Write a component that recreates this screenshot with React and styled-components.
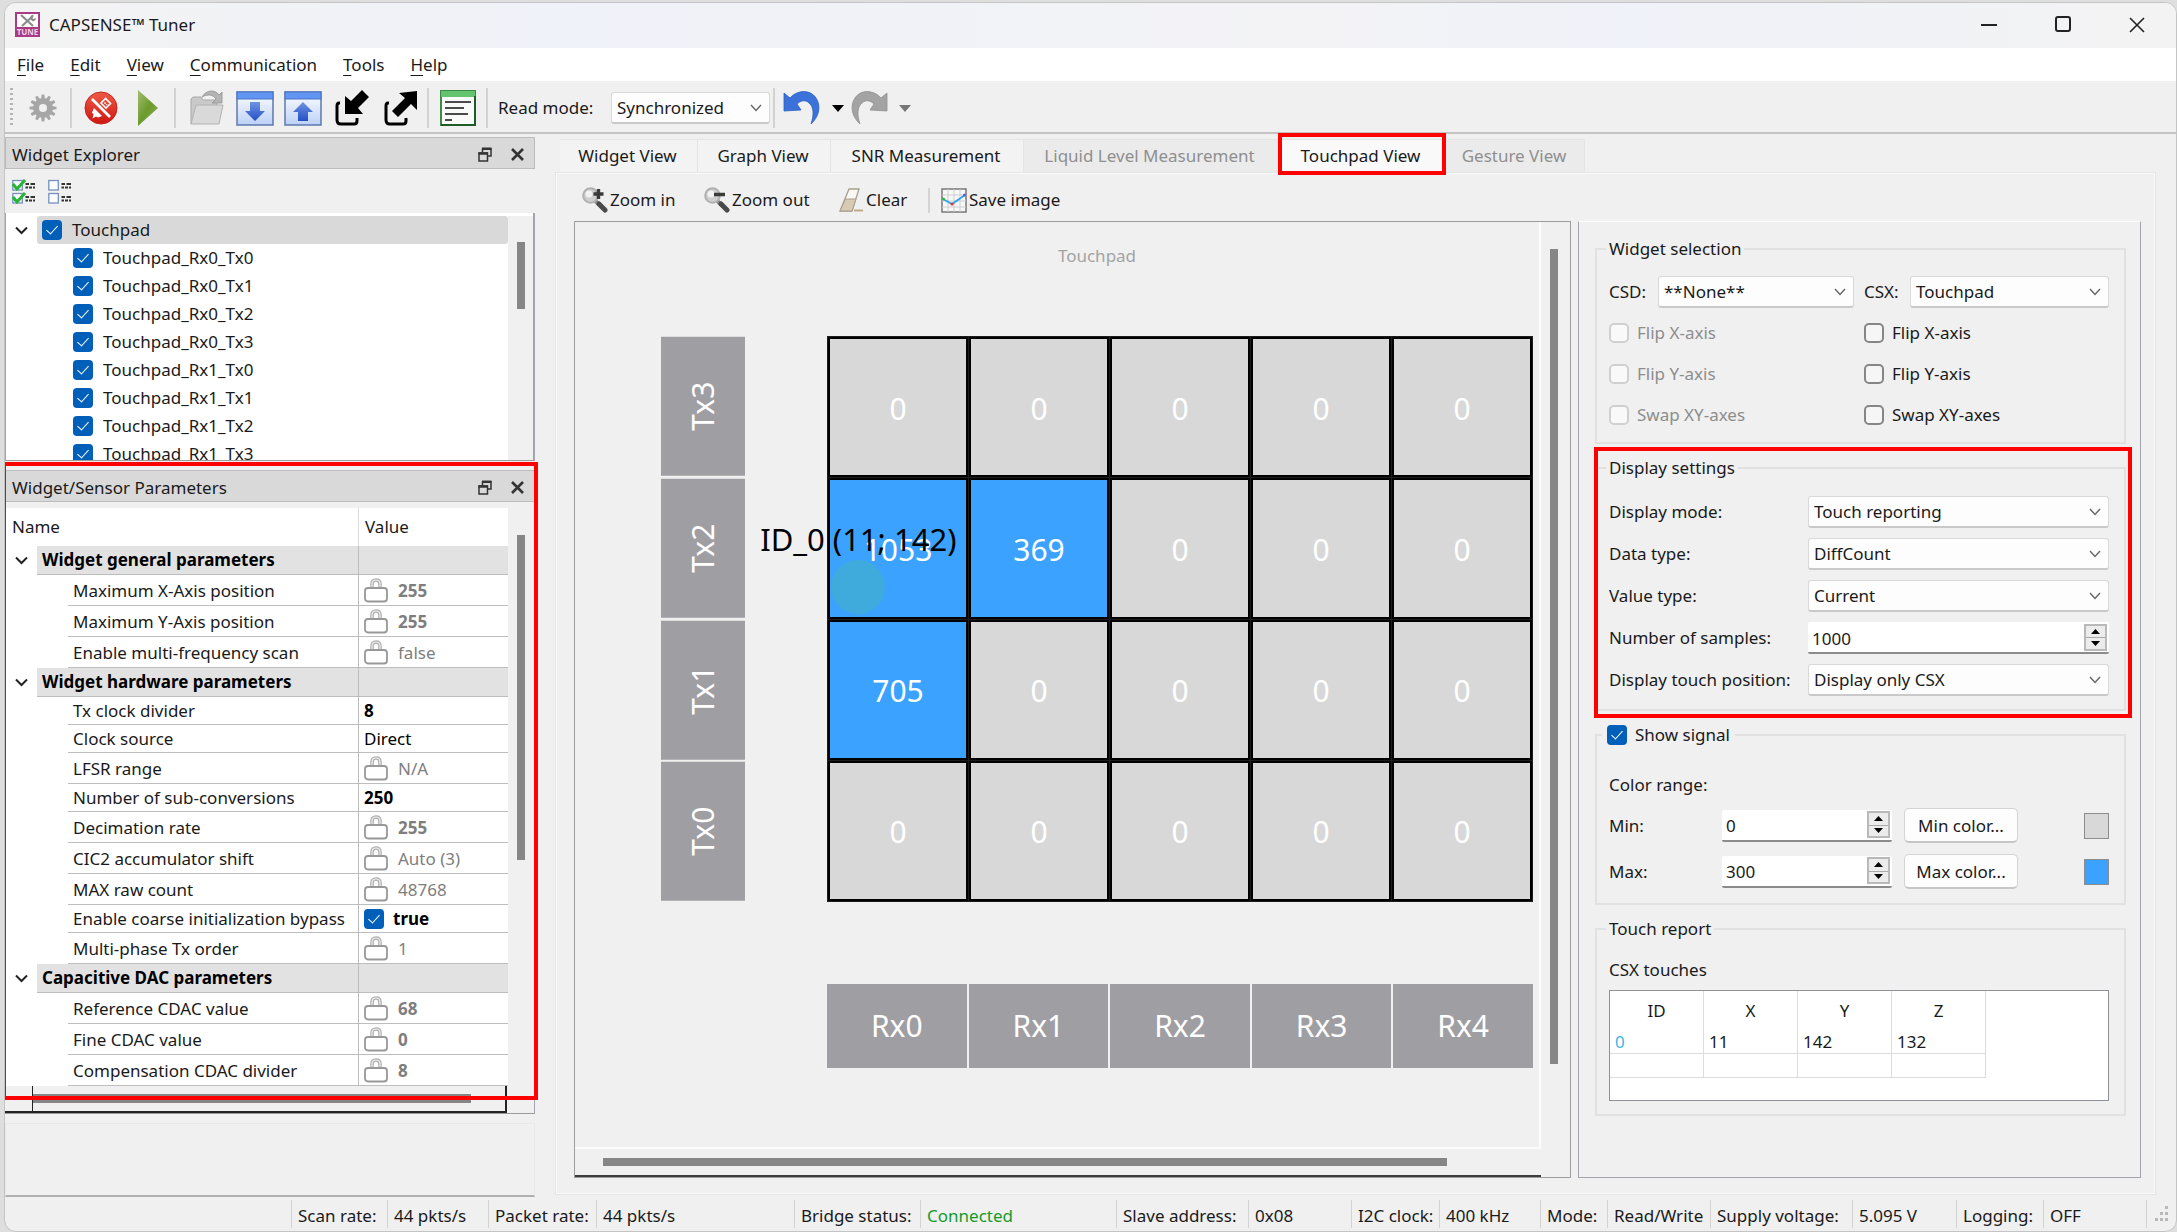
import React, { useState } from "react";
import styled, { createGlobalStyle, css } from "styled-components";

const GlobalStyle = createGlobalStyle`
  *, *::before, *::after { box-sizing: border-box; }
  body {
    margin: 0;
    background: #dedede;
    font-family: "Noto Sans", "Open Sans", sans-serif;
    font-size: 17px;
    line-height: 24px;
    color: #1a1a1a;
  }
  button, input, select { font: inherit; color: inherit; margin: 0; }
`;

/* ---------- window frame ---------- */

const Window = styled.div`
  display: flex;
  flex-direction: column;
  height: calc(100vh - 2px);
  margin: 2px 0 0 4px;
  border: 1px solid #c4c4c4;
  border-radius: 12px;
  background: #f0f0f0;
  overflow: hidden;
`;

const TitleBar = styled.header`
  display: flex;
  align-items: center;
  gap: 9px;
  height: 45px;
  flex: none;
  padding: 0 15px 2px 10px;
  background: linear-gradient(90deg, #f3f3f3, #f0f2f9 25%, #f3f3f6 60%, #f0f2f9 75%, #f3f3f3);
`;

const WindowTitle = styled.h1`
  flex: 1;
  margin: 0;
  font-size: 17px;
  font-weight: 400;
`;

const WindowButtons = styled.div`
  display: flex;
  gap: 26px;
`;

const CaptionButton = styled.button`
  display: grid;
  place-items: center;
  width: 48px;
  height: 32px;
  padding: 0;
  border: 0;
  background: none;
`;

const MenuBar = styled.nav`
  display: flex;
  align-items: center;
  gap: 26px;
  height: 33px;
  flex: none;
  padding-left: 12px;
  background: #fff;
`;

const MenuItem = styled.button`
  padding: 0;
  border: 0;
  background: none;
  line-height: 32px;
  u { text-underline-offset: 4px; text-decoration-thickness: 1px; }
`;

const Toolbar = styled.div`
  display: flex;
  align-items: center;
  height: 53px;
  flex: none;
  padding: 3px 0 0 5px;
  border-bottom: 2px solid #c3c3c3;
`;

const ToolCell = styled.div`
  display: flex;
  align-items: center;
  flex: none;
  width: ${(p) => p.$w}px;
  height: 40px;
  border-left: ${(p) => (p.$sep ? "2px solid #d2d2d2" : "0")};
  padding-left: ${(p) => p.$pad || 0}px;
`;

const IconButton = styled.button`
  display: grid;
  place-items: center;
  padding: 0;
  border: 0;
  background: none;
  svg { display: block; }
`;

const Grip = styled.div`
  width: 3px;
  height: 40px;
  background: repeating-linear-gradient(#b4b4b4 0 2px, transparent 2px 5px);
`;

/* ---------- shared controls ---------- */

const SelectBox = styled.span`
  display: grid;
  align-items: center;
  width: ${(p) => (p.$w ? p.$w + "px" : "100%")};
  height: 32px;
  > * { grid-area: 1 / 1; }
  svg { justify-self: end; margin-right: 8px; pointer-events: none; }
`;

const NativeSelect = styled.select`
  appearance: none;
  width: 100%;
  height: 32px;
  padding: 1px 28px 0 5px;
  border: 1px solid #d9d9d9;
  border-bottom: 2px solid #c9c9c9;
  border-radius: 3px;
  background: #fdfdfd;
`;

function Select({ id, value, width }) {
  return (
    <SelectBox $w={width}>
      <NativeSelect id={id} defaultValue={value}>
        <option>{value}</option>
      </NativeSelect>
      <svg width="12" height="8" viewBox="0 0 12 8" fill="none" stroke="#666" strokeWidth="1.4">
        <path d="M1 1l5 5.5L11 1" />
      </svg>
    </SelectBox>
  );
}

const CheckBox = styled.input`
  appearance: none;
  display: grid;
  place-items: center;
  flex: none;
  width: 20px;
  height: 20px;
  border: 2px solid #868686;
  border-radius: 5px;
  background: #f6f6f6;
  &:disabled { border-color: #d0d0d0; background: #f9f9f9; }
  &:checked { border: 0; border-radius: 4px; background: #005fb8; }
  &:checked::after {
    content: "";
    width: 6px;
    height: 11px;
    margin-top: -4px;
    border: solid #fff;
    border-width: 0 1px 1px 0;
    transform: rotate(42deg);
  }
`;

const CheckLabel = styled.label`
  display: flex;
  align-items: center;
  gap: ${(p) => p.$gap || 8}px;
  color: ${(p) => (p.$off ? "#8d8d8d" : "#1a1a1a")};
`;

const SpinBox = styled.span`
  display: flex;
  align-items: center;
  height: 32px;
  border-bottom: 2px solid #8b8b8b;
  border-radius: 2px;
  background: #fff;
  padding-right: 2px;
`;

const SpinInput = styled.input`
  flex: 1;
  min-width: 0;
  height: 28px;
  padding: 2px 0 0 4px;
  border: 0;
  background: none;
  appearance: textfield;
  &::-webkit-inner-spin-button { appearance: none; margin: 0; }
`;

const SpinArrows = styled.span`
  display: grid;
  grid-template-rows: 1fr 1fr;
  width: 23px;
  height: 27px;
  border: 2px solid #b9b9b9;
`;

const SpinButton = styled.button`
  display: grid;
  place-items: center;
  padding: 0;
  border: 0;
  border-top: ${(p) => (p.$down ? "1px solid #a9a9a9" : "0")};
  background: #ececec;
`;

function Spin({ id, value }) {
  const [n, setN] = useState(value);
  return (
    <SpinBox>
      <SpinInput id={id} type="number" value={n} onChange={(e) => setN(e.target.value)} />
      <SpinArrows>
        <SpinButton aria-label="Increase" onClick={() => setN(Number(n) + 1)}>
          <svg width="9" height="5"><path d="M0 5L4.500 0L9 5z" /></svg>
        </SpinButton>
        <SpinButton $down aria-label="Decrease" onClick={() => setN(Number(n) - 1)}>
          <svg width="9" height="5"><path d="M0 0L4.500 5L9 0z" /></svg>
        </SpinButton>
      </SpinArrows>
    </SpinBox>
  );
}

const Highlight = styled.div`
  position: absolute;
  inset: ${(p) => p.$inset};
  border: 4px solid #f00;
  pointer-events: none;
  z-index: 2;
`;

/* ---------- body ---------- */

const Body = styled.div`
  display: flex;
  flex: 1;
  min-height: 0;
`;

const Side = styled.aside`
  display: flex;
  flex-direction: column;
  flex: none;
  width: 530px;
  padding-top: 3px;
`;

const DockBar = styled.div`
  display: flex;
  align-items: center;
  height: 32px;
  flex: none;
  padding: 3px 10px 0 6px;
  border: 1px solid #bcbcbc;
  background: #d9d9d9;
`;

const DockName = styled.h2`
  flex: 1;
  margin: 0;
  font-size: 17px;
  font-weight: 400;
`;

const DockButtons = styled.div`
  display: flex;
  gap: 19px;
`;

const Dock = styled.section`
  position: relative;
  margin-top: 9px;
`;

const TreeTools = styled.div`
  display: flex;
  align-items: center;
  gap: 12px;
  height: 44px;
  flex: none;
  padding-left: 7px;
`;

const TreeFrame = styled.div`
  display: flex;
  height: 248px;
  flex: none;
  padding-top: 3px;
  border-right: 2px solid #a3a5ad;
  border-bottom: 1px solid #9a9a9a;
  border-left: 1px solid #a3a5ad;
  background: #fff;
  overflow: hidden;
`;

const TreeList = styled.ul`
  flex: 1;
  margin: 0;
  padding: 0;
  list-style: none;
`;

const TreeItem = styled.li`
  display: flex;
  align-items: center;
  height: 28px;
  padding-left: ${(p) => (p.$root ? 9 : 67)}px;
`;

const RootRow = styled.div`
  flex: 1;
  height: 28px;
  margin-left: 9px;
  padding: 2px 0 0 5px;
  border-radius: 3px;
  background: #d9d9d9;
`;

const ScrollTrack = styled.div`
  width: ${(p) => p.$w}px;
  flex: none;
  padding: ${(p) => p.$pad};
  background: #f0f0f0;
`;

const ScrollThumb = styled.div`
  height: ${(p) => p.$h};
  width: ${(p) => p.$w};
  background: #868686;
`;

const ParamFrame = styled.div`
  display: flex;
  margin-top: 6px;
  background: #fff;
  border-left: 1px solid #c9c9c9;
`;

const ParamTable = styled.table`
  flex: 1;
  table-layout: fixed;
  border-collapse: separate;
  border-spacing: 0;
  th, td { padding: 0; text-align: left; font-weight: 400; white-space: nowrap; }
`;

const HeadCell = styled.th`
  height: 38px;
  ${(p) => (p.$value ? "border-left: 1px solid #dcdcdc;" : "")}
  > span { padding-left: 6px; }
`;

const GroupCell = styled.td`
  && { font-weight: 700; color: #000; padding-left: 5px; }
  height: 29px;
  line-height: 26px;
  background: #e2e2e2;
  border-bottom: 1px solid #bdbdbd;
  ${(p) => (p.$value ? "border-left: 1px solid #bdbdbd;" : "")}
`;

const ParamCell = styled.td`
  && { padding: 1px 0 0 5px; }
  height: ${(p) => (p.$tall ? 31 : 28)}px;
  line-height: 26px;
  border-bottom: 1px solid #bdbdbd;
  ${(p) => (p.$value ? "border-left: 1px solid #bdbdbd;" : "")}
`;

const ParamValue = styled.span`
  display: flex;
  align-items: center;
  gap: ${(p) => (p.$locked ? 10 : 9)}px;
  color: ${(p) => (p.$locked ? "#7e7e7e" : "#000")};
  font-weight: ${(p) => (p.$bold ? 700 : 400)};
`;

const Chevron = styled.td`
  && { padding-left: 9px; }
  svg { display: block; }
`;

const HScroll = styled.div`
  display: flex;
  height: 28px;
  padding-right: 27px;
  border-right: 1px solid #a3a5ad;
  border-bottom: 1px solid #9a9a9a;
`;

const HScrollStub = styled.div`
  width: 27px;
  border-bottom: 2px solid #222;
`;

const HScrollTrack = styled.div`
  flex: 1;
  padding: 8px 34px 0 0;
  border: solid #222;
  border-width: 0 2px 2px 1px;
`;

const EmptyDock = styled.div`
  flex: 1;
  margin-top: 9px;
  border: 1px solid #e8e8e8;
  border-bottom: 2px solid #b0b0b0;
`;

/* ---------- views ---------- */

const Views = styled.main`
  display: flex;
  flex-direction: column;
  flex: 1;
  min-width: 0;
  padding: 5px 20px 2px 20px;
`;

const Tabs = styled.div`
  display: flex;
  flex: none;
  padding-left: 5px;
`;

const Tab = styled.button`
  position: relative;
  width: ${(p) => p.$w}px;
  height: 33px;
  padding: 0 2px 0 0;
  border: 1px solid #e5e5e5;
  border-width: 1px 1px 0 0;
  background: ${(p) => (p.$active ? "#f9f9f9" : p.disabled ? "#ebebeb" : "#f3f3f3")};
  color: ${(p) => (p.disabled ? "#8f8f8f" : "#1a1a1a")};
  white-space: nowrap;
`;

const Pane = styled.div`
  display: flex;
  flex-direction: column;
  flex: 1;
  min-height: 0;
  padding: 0 13px 15px 17px;
  border: 2px solid #f9f9f9;
  outline: 1px solid #e5e5e5;
  outline-offset: -1px;
`;

const ViewTools = styled.div`
  display: flex;
  align-items: center;
  height: 47px;
  flex: none;
  padding: 5px 0 0 8px;
`;

const ViewTool = styled.button`
  display: flex;
  align-items: center;
  gap: 2px;
  width: ${(p) => p.$w}px;
  padding: 0;
  border: 0;
  background: none;
  white-space: nowrap;
`;

const Divider = styled.div`
  width: 2px;
  height: 25px;
  margin-right: 11px;
  background: #d4d4d4;
`;

const Split = styled.div`
  display: flex;
  gap: 7px;
  flex: 1;
  min-height: 0;
`;

const Canvas = styled.div`
  display: grid;
  grid-template-columns: 1fr 29px;
  grid-template-rows: 1fr 28px;
  flex: 1;
  min-width: 0;
  border: 1px solid #9c9c9c;
`;

const Field = styled.div`
  padding: 22px 6px 0 86px;
  border: solid #fbfbfb;
  border-width: 0 2px 2px 0;
`;

const FieldTitle = styled.div`
  height: 24px;
  margin-bottom: 68px;
  text-align: center;
  color: #a3a3a3;
`;

const Sensors = styled.div`
  display: grid;
  grid-template-columns: 84px 1fr;
  column-gap: 82px;
  row-gap: 82px;
`;

const TxColumn = styled.div`
  display: grid;
  grid-template-rows: repeat(4, 1fr);
  gap: 3px;
  padding: 1px 0;
`;

const RxRow = styled.div`
  grid-column: 2;
  display: grid;
  grid-template-columns: repeat(5, 1fr);
  gap: 2px;
  height: 84px;
`;

const Electrode = styled.div`
  display: grid;
  place-items: center;
  background: #9f9ea3;
  color: #fff;
  font-size: 30px;
  line-height: 40px;
  ${(p) => p.$vertical && css`
    writing-mode: vertical-rl;
    transform: rotate(180deg);
  `}
`;

const Matrix = styled.div`
  position: relative;
  display: grid;
  grid-template-columns: repeat(5, 1fr);
  grid-template-rows: repeat(4, 1fr);
  gap: 1px;
  height: 566px;
  padding: 1px;
  background: #1c1c1c;
`;

const Cell = styled.div`
  display: grid;
  place-items: center;
  padding-top: 3px;
  border: 2px solid #000;
  background: ${(p) => (p.$hot ? "#3ba3ff" : "#d8d8d8")};
  color: #fff;
  font-size: 30px;
  line-height: 40px;
`;

const TouchDot = styled.div`
  position: absolute;
  left: 5%;
  top: 44%;
  width: 54px;
  height: 54px;
  margin: -25px 0 0 -31px;
  border-radius: 50%;
  background: #3eabdc;
`;

const TouchLabel = styled.div`
  position: absolute;
  left: 5%;
  top: 36%;
  margin: -1px 0 0 -4px;
  transform: translate(-50%, -50%);
  color: #000;
  font-size: 31px;
  line-height: 40px;
  white-space: nowrap;
`;

const VTrack = styled.div`
  padding: 27px 0 0 9px;
  height: 100%;
`;

const HTrack = styled.div`
  padding: 9px 94px 0 28px;
  border-bottom: 2px solid #3c3c3c;
`;

const Settings = styled.div`
  display: flex;
  flex-direction: column;
  gap: 12px;
  flex: none;
  width: 563px;
  padding: 15px 14px 0 16px;
  border: 1px solid #a3a5ad;
  border-top-color: #fcfcfc;
`;

const GroupWrap = styled.div`
  position: relative;
`;

const Group = styled.fieldset`
  min-width: 0;
  margin: 0;
  padding: ${(p) => p.$pad};
  border: 2px solid #e1e1e1;
`;

const Legend = styled.legend`
  height: 24px;
  margin-left: ${(p) => (p.$check ? -7 : -3)}px;
  padding: 0 ${(p) => (p.$check ? 5 : 3)}px;
`;

const AxisGrid = styled.div`
  display: grid;
  grid-template-columns: 255px 1fr;
  grid-template-rows: 36px repeat(3, 41px);
  align-items: center;
`;

const Picker = styled.div`
  display: grid;
  grid-template-columns: ${(p) => p.$label}px 1fr;
  align-items: center;
  height: 36px;
  padding-right: ${(p) => p.$end || 0}px;
  padding-bottom: 4px;
`;

const FormGrid = styled.div`
  display: grid;
  grid-template-columns: 199px 1fr;
  row-gap: 10px;
  align-items: center;
  label { white-space: nowrap; }
`;

const RangeTitle = styled.div`
  height: 26px;
  margin-bottom: 9px;
`;

const RangeGrid = styled.div`
  display: grid;
  grid-template-columns: 113px 170px 114px 1fr;
  row-gap: 11px;
  align-items: center;
  > button { margin-left: 12px; width: 114px; }
`;

const PushButton = styled.button`
  height: 35px;
  padding: 2px 0 0;
  border: 1px solid #d4d4d4;
  border-bottom: 2px solid #c6c6c6;
  border-radius: 5px;
  background: #fdfdfd;
`;

const Swatch = styled.span`
  justify-self: end;
  width: 25px;
  height: 26px;
  border: 1px solid #8c8c8c;
  background: ${(p) => p.$color};
`;

const TouchFrame = styled.div`
  height: 111px;
  margin-top: 8px;
  border: 1px solid #8f929b;
  background: #fff;
`;

const TouchTable = styled.table`
  width: 376px;
  table-layout: fixed;
  border-collapse: separate;
  border-spacing: 0;
  th, td { padding: 0; font-weight: 400; border-right: 1px solid #dcdcdc; }
  th { height: 39px; }
  td { height: 24px; padding-left: 5px; line-height: 20px; border-bottom: 1px solid #dcdcdc; }
  td:first-child { color: #41b4e6; }
`;

/* ---------- status bar ---------- */

const StatusBar = styled.footer`
  display: flex;
  align-items: center;
  justify-content: flex-end;
  height: 34px;
  flex: none;
`;

const StatusCell = styled.div`
  flex: none;
  width: ${(p) => p.$w}px;
  height: 28px;
  padding: 4px 0 0 6px;
  border-left: 1px solid #d3d3d3;
  white-space: nowrap;
  color: ${(p) => (p.$ok ? "#179a2b" : "#1a1a1a")};
`;

/* ---------- icons ---------- */

const AppIcon = () => (
  <svg width="25" height="25" viewBox="0 0 25 25">
    <rect x="1" y="1" width="23" height="23" fill="#fff" stroke="#a83a86" strokeWidth="2" />
    <path d="M6 3l12 11M18 4l-11 10" stroke="#8b8b8b" strokeWidth="2.200" fill="none" />
    <path d="M15 6a3 3 0 0 1 4-3l-2 2 1 2 3-1a3 3 0 0 1-4 3z" fill="#8b8b8b" />
    <rect x="1" y="15" width="23" height="9" fill="#a83a86" />
    <text x="12.500" y="23" fontSize="8" fontWeight="700" fill="#f0cfe5" textAnchor="middle">TUNE</text>
  </svg>
);

const Gear = () => (
  <svg width="28" height="28" viewBox="-14 -14 28 28">
    {Array.from({ length: 12 }, (_, i) => (
      <path key={i} d="M-2 -8L-1.300 -13.500H1.300L2 -8z" fill="#a6a6a6" transform={`rotate(${i * 30})`} />
    ))}
    <circle r="7" fill="none" stroke="#a6a6a6" strokeWidth="6" />
  </svg>
);

const Disconnect = () => (
  <svg width="34" height="34" viewBox="0 0 34 34">
    <defs>
      <linearGradient id="red" x2="0" y2="1">
        <stop offset="0" stopColor="#ee5b45" /><stop offset="1" stopColor="#cf1512" />
      </linearGradient>
    </defs>
    <circle cx="17" cy="17" r="16" fill="url(#red)" stroke="#c2261c" />
    <g stroke="#fff" fill="none" strokeWidth="1.600">
      <path d="M17 12l4.500-4.500 5 5L22 17z" />
      <path d="M20.500 11.500l2.500 2.500" strokeDasharray="1.500 1" />
      <path d="M8 8l18 18" strokeWidth="2.600" />
      <path d="M10 17l8 8-4 1.500-2-1-3.500 2 1-4-1.500-2z" fill="#fff" stroke="none" />
    </g>
  </svg>
);

const Play = () => (
  <svg width="20" height="36" viewBox="0 0 20 36">
    <defs>
      <linearGradient id="green" x2="1" y2="1">
        <stop offset="0" stopColor="#a3bf72" /><stop offset="0.500" stopColor="#6c9a2c" /><stop offset="1" stopColor="#8caf59" />
      </linearGradient>
    </defs>
    <path d="M0 0L20 18L0 36z" fill="url(#green)" />
  </svg>
);

const Folder = () => (
  <svg width="36" height="36" viewBox="0 0 36 36">
    <path d="M2 34V9l2-2h8l2 3h14v8" fill="#c9c9c9" stroke="#a9a9a9" />
    <path d="M2 34L7 15h27l-4 19z" fill="#d9d9d9" stroke="#b2b2b2" />
    <path d="M13 7c4-7 13-8 17-2l3-3v11H23l4-4c-3-5-9-5-14-2z" fill="#b4b4b4" stroke="#9c9c9c" />
  </svg>
);

const PaneArrow = ({ up }) => (
  <svg width="38" height="35" viewBox="0 0 38 35">
    <defs>
      <linearGradient id="sky" x2="0" y2="1">
        <stop offset="0" stopColor="#fff" /><stop offset="1" stopColor="#bcd0f7" />
      </linearGradient>
      <linearGradient id="arrow" x2="0" y2="1">
        <stop offset="0" stopColor="#6f93e2" /><stop offset="1" stopColor="#2450c6" />
      </linearGradient>
    </defs>
    <rect x="1" y="1" width="36" height="33" fill="url(#sky)" stroke="#5b79ae" strokeWidth="1.500" />
    <rect x="1" y="1" width="36" height="7" fill="#6396f3" stroke="#4a72c4" />
    <path
      d={up ? "M19 11L29 21H24V30H14V21H9z" : "M19 30L9 20H14V11H24V20H29z"}
      fill="url(#arrow)"
    />
  </svg>
);

const Transfer = ({ out }) => (
  <svg width="34" height="36" viewBox="0 0 34 36">
    <path d="M5 13H4Q2 13 2 16V30Q2 34 6 34H19Q22 34 22 31V28" fill="none" stroke="#000" strokeWidth="3" />
    {out ? (
      <path d="M33 1V20L27 14L14 27L8 21L21 8L15 3z" />
    ) : (
      <path d="M10 24V6L16 11L27 0L34 7L23 18L28 24z" />
    )}
  </svg>
);

const LogIcon = () => (
  <svg width="36" height="36" viewBox="0 0 36 36">
    <rect x="1" y="1" width="34" height="34" fill="#f8fbf8" stroke="#3b8a45" strokeWidth="2" />
    <rect x="1" y="1" width="34" height="6" fill="#63c36e" />
    <path d="M5 12H31M5 18H24M5 24H28M5 30H12" stroke="#4b4b4b" strokeWidth="2.200" />
    <path d="M1 35H35V6" fill="none" stroke="#1f5c28" strokeWidth="2" />
  </svg>
);

const HistoryArrow = ({ redo }) => (
  <svg width="37" height="36" viewBox="0 0 37 36">
    <path
      transform={redo ? "translate(37 0) scale(-1 1)" : undefined}
      d="M1 3L7 8C14 0 27-1 33 8C39 17 35 28 28 34C31 25 31 17 26 13C22 9 17 11 14 14L18 20L1 21z"
      fill={redo ? "#a3a3a3" : "#3a72da"}
      stroke={redo ? "#8f8f8f" : "#2c5fc4"}
      strokeWidth="0.800"
    />
  </svg>
);

const Caret = ({ color }) => (
  <svg width="12" height="7"><path d="M0 0H12L6 7z" fill={color} /></svg>
);

const FloatIcon = () => (
  <svg width="14" height="15" viewBox="0 0 14 15" fill="none" stroke="#333" strokeWidth="1.500">
    <path d="M4.500 5V2H13V9H10" /><path d="M4 1.800H13.500" strokeWidth="2.500" />
    <rect x="1" y="6" width="8.500" height="8" /><path d="M0.500 6.500H10" strokeWidth="2.500" />
  </svg>
);

const CrossIcon = () => (
  <svg width="13" height="13" viewBox="0 0 13 13" stroke="#333" strokeWidth="2.600">
    <path d="M1 1L12 12M12 1L1 12" />
  </svg>
);

const ChevronIcon = () => (
  <svg width="13" height="9" viewBox="0 0 13 9" fill="none" stroke="#222" strokeWidth="2">
    <path d="M1 1.500L6.500 7L12 1.500" />
  </svg>
);

const ChecksIcon = ({ on }) => (
  <svg width="24" height="25" viewBox="0 0 24 25" fill="none">
    {[1, 14].map((y) => (
      <g key={y} transform={`translate(0 ${y})`}>
        <rect x="0.800" y="0.500" width="9.500" height="9.500" fill="#fafcff" stroke="#7790bd" strokeWidth="1.300" />
        <path d="M13.500 4H17M18.500 4H23M13.500 7.500H16M17 7.500H20M21 7.500H23" stroke="#333" strokeWidth="1.800" />
        {on && <path d="M1 4L5 9L13 0" stroke="#26b534" strokeWidth="3" />}
      </g>
    ))}
  </svg>
);

const LockIcon = () => (
  <svg width="24" height="25" viewBox="0 0 24 25" fill="none">
    <path d="M8 11V6Q8 2 12 2T16 6V11" stroke="#b0b0b0" strokeWidth="3.600" />
    <path d="M8 11V6Q8 2 12 2T16 6V11" stroke="#efefef" strokeWidth="1.200" />
    <rect x="1" y="10" width="22" height="13.500" rx="3" fill="#fff" stroke="#989898" strokeWidth="1.800" />
  </svg>
);

const ZoomIcon = ({ plus }) => (
  <svg width="26" height="26" viewBox="0 0 26 26">
    <path d="M13.500 14L17 17.500" stroke="#8a8a8a" strokeWidth="4" />
    <path d="M17 17L23 23" stroke="#4a4a4a" strokeWidth="5" strokeLinecap="round" />
    <circle cx="8.500" cy="8.500" r="7.300" fill="#cfcfcf" stroke="#b0b0b0" strokeWidth="2" />
    <circle cx="7" cy="7" r="3.500" fill="#f2f2f2" />
    <path d={plus ? "M11.500 7H21.500M16.500 2V12" : "M10 7.500H21"} stroke="#3a3a3a" strokeWidth="3.400" />
  </svg>
);

const EraserIcon = () => (
  <svg width="25" height="25" viewBox="0 0 25 25">
    <path d="M10 1H20L13 23H1z" fill="#faf8f4" stroke="#a99e8e" strokeWidth="1.300" />
    <path d="M6.500 11H17L13 23H1z" fill="#d9cab3" stroke="#a99e8e" />
    <path d="M15 22.500H24" stroke="#c0ab86" strokeWidth="2" />
  </svg>
);

const ChartIcon = () => (
  <svg width="26" height="25" viewBox="0 0 26 25" fill="none">
    <rect x="1" y="1" width="24" height="23" fill="#f7f7f7" stroke="#777" strokeWidth="1.500" />
    <path d="M7 1V24M13 1V24M19 1V24M1 7H25M1 13H25M1 19H25" stroke="#cfcfcf" />
    <path d="M2 11L11 16L24 7" stroke="#35a7e8" strokeWidth="2" />
    <circle cx="2.500" cy="11" r="1.500" fill="#39b54a" /><circle cx="11" cy="16" r="1.500" fill="#e33" />
    <circle cx="23.500" cy="7" r="1.500" fill="#6a5acd" />
  </svg>
);

const ResizeGrip = () => (
  <svg width="16" height="16" fill="#b9b9b9">
    {[[12, 0], [7, 6], [12, 6], [2, 12], [7, 12], [12, 12]].map(([x, y]) => (
      <rect key={`${x}-${y}`} x={x} y={y} width="3" height="3" />
    ))}
  </svg>
);

/* ---------- data ---------- */

const menus = ["File", "Edit", "View", "Communication", "Tools", "Help"];

const sensors = ["Rx0_Tx0", "Rx0_Tx1", "Rx0_Tx2", "Rx0_Tx3", "Rx1_Tx0", "Rx1_Tx1", "Rx1_Tx2", "Rx1_Tx3"];

const params = [
  { group: "Widget general parameters" },
  { name: "Maximum X-Axis position", value: "255", locked: true, bold: true },
  { name: "Maximum Y-Axis position", value: "255", locked: true, bold: true },
  { name: "Enable multi-frequency scan", value: "false", locked: true },
  { group: "Widget hardware parameters" },
  { name: "Tx clock divider", value: "8", bold: true },
  { name: "Clock source", value: "Direct" },
  { name: "LFSR range", value: "N/A", locked: true },
  { name: "Number of sub-conversions", value: "250", bold: true },
  { name: "Decimation rate", value: "255", locked: true, bold: true },
  { name: "CIC2 accumulator shift", value: "Auto (3)", locked: true },
  { name: "MAX raw count", value: "48768", locked: true },
  { name: "Enable coarse initialization bypass", value: "true", check: true, bold: true },
  { name: "Multi-phase Tx order", value: "1", locked: true },
  { group: "Capacitive DAC parameters" },
  { name: "Reference CDAC value", value: "68", locked: true, bold: true },
  { name: "Fine CDAC value", value: "0", locked: true, bold: true },
  { name: "Compensation CDAC divider", value: "8", locked: true, bold: true },
];

const tabs = [
  { label: "Widget View", w: 138 },
  { label: "Graph View", w: 133 },
  { label: "SNR Measurement", w: 193 },
  { label: "Liquid Level Measurement", w: 254, off: true },
  { label: "Touchpad View", w: 168, active: true },
  { label: "Gesture View", w: 139, off: true },
];

const counts = [
  [0, 0, 0, 0, 0],
  [1053, 369, 0, 0, 0],
  [705, 0, 0, 0, 0],
  [0, 0, 0, 0, 0],
];

const displaySettings = [
  { id: "mode", label: "Display mode:", value: "Touch reporting" },
  { id: "data", label: "Data type:", value: "DiffCount" },
  { id: "value", label: "Value type:", value: "Current" },
  { id: "samples", label: "Number of samples:", value: 1000, spin: true },
  { id: "position", label: "Display touch position:", value: "Display only CSX" },
];

const status = [
  ["Scan rate:", 96], ["44 pkts/s", 101], ["Packet rate:", 108], ["44 pkts/s", 198],
  ["Bridge status:", 126], ["Connected", 196, true], ["Slave address:", 132], ["0x08", 103],
  ["I2C clock:", 88], ["400 kHz", 101], ["Mode:", 67], ["Read/Write", 103],
  ["Supply voltage:", 142], ["5.095 V", 104], ["Logging:", 87], ["OFF", 103],
];

/* ---------- sections ---------- */

function DockTitle({ children }) {
  return (
    <DockBar>
      <DockName>{children}</DockName>
      <DockButtons>
        <IconButton aria-label="Float"><FloatIcon /></IconButton>
        <IconButton aria-label="Close"><CrossIcon /></IconButton>
      </DockButtons>
    </DockBar>
  );
}

function MainToolbar() {
  return (
    <Toolbar>
      <ToolCell $w={19}><Grip /></ToolCell>
      <ToolCell $w={41}><IconButton aria-label="Configure"><Gear /></IconButton></ToolCell>
      <ToolCell $w={68} $sep $pad={12}><IconButton aria-label="Disconnect"><Disconnect /></IconButton></ToolCell>
      <ToolCell $w={36}><IconButton aria-label="Start"><Play /></IconButton></ToolCell>
      <ToolCell $w={62} $sep $pad={13}><IconButton aria-label="Open"><Folder /></IconButton></ToolCell>
      <ToolCell $w={48}><IconButton aria-label="Apply to device"><PaneArrow /></IconButton></ToolCell>
      <ToolCell $w={51}><IconButton aria-label="Apply to project"><PaneArrow up /></IconButton></ToolCell>
      <ToolCell $w={49}><IconButton aria-label="Import"><Transfer /></IconButton></ToolCell>
      <ToolCell $w={43}><IconButton aria-label="Export"><Transfer out /></IconButton></ToolCell>
      <ToolCell $w={59} $sep $pad={11}><IconButton aria-label="Log"><LogIcon /></IconButton></ToolCell>
      <ToolCell $w={125} $sep $pad={10}><label htmlFor="read">Read mode:</label></ToolCell>
      <ToolCell $w={162}><Select id="read" value="Synchronized" width={159} /></ToolCell>
      <ToolCell $w={59} $sep $pad={8}><IconButton aria-label="Undo"><HistoryArrow /></IconButton></ToolCell>
      <ToolCell $w={19}><IconButton aria-label="Undo list"><Caret color="#000" /></IconButton></ToolCell>
      <ToolCell $w={48}><IconButton aria-label="Redo"><HistoryArrow redo /></IconButton></ToolCell>
      <ToolCell $w={20}><IconButton aria-label="Redo list"><Caret color="#777" /></IconButton></ToolCell>
    </Toolbar>
  );
}

function ParamRow({ row }) {
  if (row.group) {
    return (
      <tr>
        <Chevron><ChevronIcon /></Chevron>
        <GroupCell colSpan={2}>{row.group}</GroupCell>
        <GroupCell $value />
      </tr>
    );
  }
  return (
    <tr>
      <td colSpan={2} />
      <ParamCell $tall={row.locked}>{row.name}</ParamCell>
      <ParamCell $tall={row.locked} $value>
        <ParamValue $locked={row.locked} $bold={row.bold}>
          {row.locked && <LockIcon />}
          {row.check && <CheckBox type="checkbox" defaultChecked aria-label={row.name} />}
          {row.value}
        </ParamValue>
      </ParamCell>
    </tr>
  );
}

function SidePanels() {
  return (
    <Side>
      <DockTitle>Widget Explorer</DockTitle>
      <TreeTools>
        <IconButton aria-label="Select all"><ChecksIcon on /></IconButton>
        <IconButton aria-label="Clear all"><ChecksIcon /></IconButton>
      </TreeTools>
      <TreeFrame>
        <TreeList>
          <TreeItem $root>
            <ChevronIcon />
            <RootRow>
              <CheckLabel $gap={10}><CheckBox type="checkbox" defaultChecked />Touchpad</CheckLabel>
            </RootRow>
          </TreeItem>
          {sensors.map((s) => (
            <TreeItem key={s}>
              <CheckLabel $gap={10}><CheckBox type="checkbox" defaultChecked />{`Touchpad_${s}`}</CheckLabel>
            </TreeItem>
          ))}
        </TreeList>
        <ScrollTrack $w={25} $pad="26px 0 0 9px"><ScrollThumb $w="8px" $h="67px" /></ScrollTrack>
      </TreeFrame>
      <Dock>
        <DockTitle>Widget/Sensor Parameters</DockTitle>
        <ParamFrame>
          <ParamTable>
            <colgroup>
              <col width="31" /><col width="31" /><col width="290" /><col />
            </colgroup>
            <thead>
              <tr>
                <HeadCell colSpan={3}><span>Name</span></HeadCell>
                <HeadCell $value><span>Value</span></HeadCell>
              </tr>
            </thead>
            <tbody>
              {params.map((row) => <ParamRow key={row.group || row.name} row={row} />)}
            </tbody>
          </ParamTable>
          <ScrollTrack $w={27} $pad="27px 0 0 9px"><ScrollThumb $w="8px" $h="325px" /></ScrollTrack>
        </ParamFrame>
        <HScroll>
          <HScrollStub />
          <HScrollTrack><ScrollThumb $w="100%" $h="9px" /></HScrollTrack>
        </HScroll>
        <Highlight $inset="-8px -3px 14px -3px" />
      </Dock>
      <EmptyDock />
    </Side>
  );
}

function TouchpadCanvas() {
  return (
    <Canvas>
      <Field>
        <FieldTitle>Touchpad</FieldTitle>
        <Sensors>
          <TxColumn>
            {["Tx3", "Tx2", "Tx1", "Tx0"].map((t) => <Electrode key={t} $vertical>{t}</Electrode>)}
          </TxColumn>
          <Matrix>
            {counts.flat().map((n, i) => <Cell key={i} $hot={n > 0}>{n}</Cell>)}
            <TouchDot />
            <TouchLabel>ID_0 (11; 142)</TouchLabel>
          </Matrix>
          <RxRow>
            {["Rx0", "Rx1", "Rx2", "Rx3", "Rx4"].map((t) => <Electrode key={t}>{t}</Electrode>)}
          </RxRow>
        </Sensors>
      </Field>
      <VTrack><ScrollThumb $w="8px" $h="90.500%" /></VTrack>
      <HTrack><ScrollThumb $w="100%" $h="8px" /></HTrack>
    </Canvas>
  );
}

function AxisChecks({ prefix, off }) {
  return ["Flip X-axis", "Flip Y-axis", "Swap XY-axes"].map((t, i) => (
    <CheckLabel key={prefix + t} $off={off} style={{ gridRow: i + 2 }}>
      <CheckBox type="checkbox" disabled={off} />{t}
    </CheckLabel>
  ));
}

function SettingsPanel() {
  return (
    <Settings>
      <Group $pad="15px 15px 7px 12px">
        <Legend>Widget selection</Legend>
        <AxisGrid>
          <Picker $label={49} $end={10}><label htmlFor="csd">CSD:</label><Select id="csd" value="**None**" /></Picker>
          <Picker $label={46}><label htmlFor="csx">CSX:</label><Select id="csx" value="Touchpad" /></Picker>
          <AxisChecks prefix="csd" off />
          <AxisChecks prefix="csx" />
        </AxisGrid>
      </Group>
      <GroupWrap>
        <Group $pad="16px 15px 13px 12px">
          <Legend>Display settings</Legend>
          <FormGrid>
            {displaySettings.map((s) => (
              <React.Fragment key={s.id}>
                <label htmlFor={s.id}>{s.label}</label>
                {s.spin ? <Spin id={s.id} value={s.value} /> : <Select id={s.id} value={s.value} />}
              </React.Fragment>
            ))}
          </FormGrid>
        </Group>
        <Highlight $inset="-9px -6px -7px -1px" />
      </GroupWrap>
      <Group $pad="26px 15px 14px 12px">
        <Legend $check>
          <CheckLabel><CheckBox type="checkbox" defaultChecked />Show signal</CheckLabel>
        </Legend>
        <RangeTitle>Color range:</RangeTitle>
        <RangeGrid>
          <label htmlFor="min">Min:</label>
          <Spin id="min" value={0} />
          <PushButton>Min color...</PushButton>
          <Swatch $color="#d8d8d8" />
          <label htmlFor="max">Max:</label>
          <Spin id="max" value={300} />
          <PushButton>Max color...</PushButton>
          <Swatch $color="#3ba3ff" />
        </RangeGrid>
      </Group>
      <Group $pad="17px 15px 13px 12px">
        <Legend>Touch report</Legend>
        <div>CSX touches</div>
        <TouchFrame>
          <TouchTable>
            <thead><tr><th>ID</th><th>X</th><th>Y</th><th>Z</th></tr></thead>
            <tbody>
              <tr><td>0</td><td>11</td><td>142</td><td>132</td></tr>
              <tr><td /><td /><td /><td /></tr>
            </tbody>
          </TouchTable>
        </TouchFrame>
      </Group>
    </Settings>
  );
}

export default function App() {
  return (
    <>
      <GlobalStyle />
      <Window>
        <TitleBar>
          <AppIcon />
          <WindowTitle>CAPSENSE™ Tuner</WindowTitle>
          <WindowButtons>
            <CaptionButton aria-label="Minimize">
              <svg width="16" height="2"><path d="M0 1H16" stroke="#222" strokeWidth="2" /></svg>
            </CaptionButton>
            <CaptionButton aria-label="Maximize">
              <svg width="17" height="17"><rect x="1" y="1" width="14" height="14" rx="2" fill="none" stroke="#222" strokeWidth="2" /></svg>
            </CaptionButton>
            <CaptionButton aria-label="Close">
              <svg width="16" height="16"><path d="M1 1L15 15M15 1L1 15" stroke="#222" strokeWidth="1.600" /></svg>
            </CaptionButton>
          </WindowButtons>
        </TitleBar>
        <MenuBar>
          {menus.map((m) => <MenuItem key={m}><u>{m[0]}</u>{m.slice(1)}</MenuItem>)}
        </MenuBar>
        <MainToolbar />
        <Body>
          <SidePanels />
          <Views>
            <Tabs role="tablist">
              {tabs.map((t) => (
                <Tab key={t.label} role="tab" aria-selected={!!t.active} $w={t.w} $active={t.active} disabled={t.off}>
                  {t.label}
                  {t.active && <Highlight $inset="-7px -1px -3px 0" />}
                </Tab>
              ))}
            </Tabs>
            <Pane>
              <ViewTools>
                <ViewTool $w={122}><ZoomIcon plus />Zoom in</ViewTool>
                <ViewTool $w={135}><ZoomIcon />Zoom out</ViewTool>
                <ViewTool $w={89}><EraserIcon />Clear</ViewTool>
                <Divider />
                <ViewTool $w={130}><ChartIcon />Save image</ViewTool>
              </ViewTools>
              <Split>
                <TouchpadCanvas />
                <SettingsPanel />
              </Split>
            </Pane>
          </Views>
        </Body>
        <StatusBar>
          {status.map(([text, w, ok], i) => <StatusCell key={i} $w={w} $ok={ok}>{text}</StatusCell>)}
          <StatusCell $w={30}><ResizeGrip /></StatusCell>
        </StatusBar>
      </Window>
    </>
  );
}
